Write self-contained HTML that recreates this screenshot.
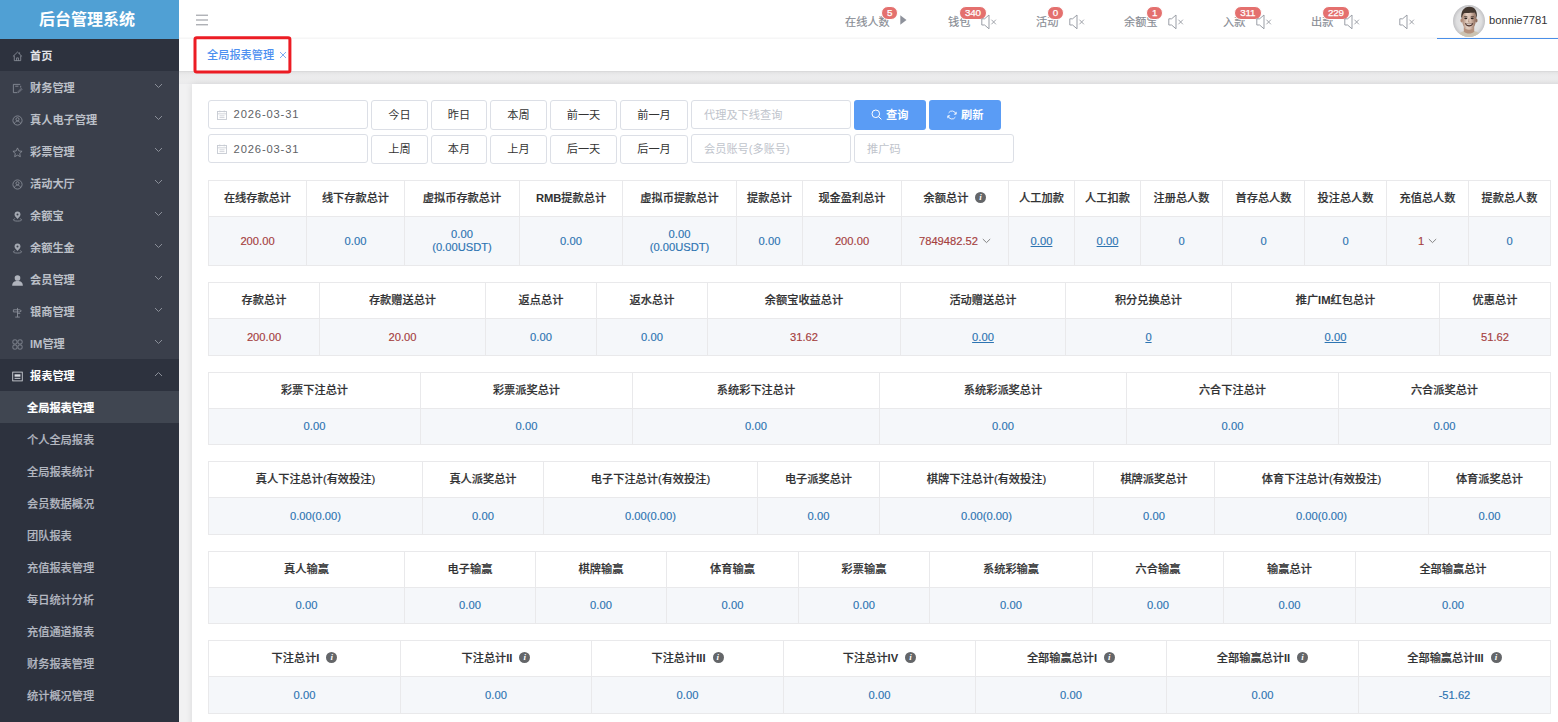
<!DOCTYPE html><html lang="zh-CN"><head><meta charset="utf-8"><title>后台管理系统</title><style>
*{box-sizing:border-box;margin:0;padding:0}
html,body{width:1558px;height:722px;overflow:hidden}
body{position:relative;background:#f1f1f2;font-family:"Liberation Sans","Noto Sans CJK SC",sans-serif;font-size:11.2px;color:#333;-webkit-font-smoothing:antialiased}
.abs{position:absolute}
#side{position:absolute;left:0;top:0;width:179px;height:722px;background:#3a3f4b;overflow:hidden}
#logo{position:absolute;left:0;top:0;width:179px;height:39px;background:#50a0d4;color:#fff;font-weight:700;font-size:16px;line-height:39px;text-align:center;padding-right:5px}
.mi{position:absolute;left:0;width:179px;height:32px;line-height:35px;color:#bcc0c8;font-weight:700;font-size:11.2px;padding-left:30px;white-space:nowrap}
.mi svg.ic{position:absolute;left:11.5px;top:11.5px;width:11px;height:11px}
.mi svg.ch{position:absolute;left:154px;top:11.5px;width:9px;height:6px}
.sub{font-weight:500;-webkit-text-stroke:0.2px currentColor;color:#b4b8c1;padding-left:27px;background:#2d323e}
.dark{background:#2d323e}
#top{position:absolute;left:179px;top:0;width:1379px;height:39px;background:#fff}
#topline{position:absolute;left:179px;top:37px;width:1379px;height:2px;background:linear-gradient(#fcfcfc,#f4f4f5)}
#tabs{position:absolute;left:179px;top:39px;width:1379px;height:32px;background:#fff}
#shadow{position:absolute;left:179px;top:71px;width:1379px;height:13px;background:linear-gradient(#d4d4d5 0,#e3e3e4 1.2px,#ebebec 4px,#ededee 8px,#ebebec 12px,#e9e9ec 13px)}
#card{position:absolute;left:192px;top:84px;width:1380px;height:660px;background:#fff;box-shadow:0 0 7px rgba(0,0,0,.10)}
.nav{position:absolute;top:0;height:39px;line-height:44.5px;font-size:11.2px;color:#888c94;white-space:nowrap;font-weight:400;-webkit-text-stroke:0.15px #888c94}
.bdg{position:absolute;top:5.5px;height:14.6px;line-height:12.6px;border-radius:8px;background:#e4706e;color:#fff;font-size:9.8px;letter-spacing:-.25px;text-align:center;border:1px solid #fff;font-weight:400;padding:0 4.4px 0 4.7px;-webkit-text-stroke:0.25px #fff}
.spk{position:absolute;top:14px;width:16px;height:16px}
.inp{position:absolute;height:29px;border:1px solid #dcdfe6;border-radius:3px;background:#fff;line-height:28.5px;font-size:11.2px;color:#606266;white-space:nowrap}
.ph{color:#c0c4cc;padding-left:12px;font-weight:400}
.btn{position:absolute;height:29px;border:1px solid #dcdfe6;border-radius:3px;background:#fff;line-height:28px;font-size:11.2px;color:#333;text-align:center;white-space:nowrap}
.pbtn{position:absolute;height:30px;border-radius:3px;background:#5a9cf5;color:#fff;font-weight:700;line-height:30px;font-size:11.2px;white-space:nowrap}
.tb{position:absolute;left:208px;width:1343px;border-top:1px solid #e9e9eb;border-left:1px solid #e9e9eb}
.c{position:absolute;border-right:1px solid #e9e9eb;border-bottom:1px solid #e9e9eb;text-align:center;white-space:nowrap;display:flex;align-items:center;justify-content:center}
.h{background:#fff;color:#303133;font-weight:500;-webkit-text-stroke:0.2px #333;font-size:11.2px;padding-bottom:4px}
.h b{font-weight:700;-webkit-text-stroke:0;position:relative;top:1px}
.b{background:#f5f7fa;font-size:11.2px;-webkit-text-stroke:0.15px currentColor}
.b2{padding-bottom:2px}
.r{color:#a5403e}.u{color:#2d74b2}
.lk{color:#2d74b2;text-decoration:underline}
.info{display:inline-block;width:11px;height:11px;border-radius:50%;background:#646669;color:#fff;font-size:9px;line-height:11px;font-style:italic;font-weight:700;font-family:"Liberation Serif",serif;margin-left:7px;text-align:center;vertical-align:-2px;position:relative;top:1px;-webkit-text-stroke:0;text-indent:-0.5px}
</style></head><body>
<div id="side"><div id="logo">后台管理系统</div>
<div class="mi dark" style="top:39px;color:#e1e3e8;"><svg class="ic" viewBox="0 0 12 12"><path d="M1 6 L6 1.2 L11 6 M2.5 5 V10.5 H9.5 V5 M5 10.5 V7.5 H7 V10.5 M8.3 1.5 V3" fill="none" stroke="#8d929c" stroke-width="0.9"/></svg>首页</div>
<div class="mi" style="top:71px;"><svg class="ic" viewBox="0 0 12 12"><path d="M9 1.5 H1.5 V10.5 H6 M3.5 3.5 H7 M9.5 3 V5" fill="none" stroke="#8d929c" stroke-width="0.9"/><path d="M6.5 9.5 L10 6 L10.8 7 L7.5 10.3 Z" fill="none" stroke="#8d929c" stroke-width="0.8"/></svg>财务管理<svg class="ch" viewBox="0 0 9 6"><path d="M1 1 L4.5 4.5 L8 1" fill="none" stroke="#8a8f99" stroke-width="1"/></svg></div>
<div class="mi" style="top:103px;"><svg class="ic" viewBox="0 0 12 12"><circle cx="6" cy="6" r="5" fill="none" stroke="#8d929c" stroke-width="0.9"/><circle cx="6" cy="4.6" r="1.7" fill="none" stroke="#8d929c" stroke-width="0.9"/><path d="M2.6 9.6 C3.5 7 5 6.6 6 6.6 C7 6.6 8.5 7 9.4 9.6" fill="none" stroke="#8d929c" stroke-width="0.9"/></svg>真人电子管理<svg class="ch" viewBox="0 0 9 6"><path d="M1 1 L4.5 4.5 L8 1" fill="none" stroke="#8a8f99" stroke-width="1"/></svg></div>
<div class="mi" style="top:135px;"><svg class="ic" viewBox="0 0 12 12"><path d="M6 1 L7.5 4.3 L11 4.7 L8.4 7.1 L9.1 10.6 L6 8.9 L2.9 10.6 L3.6 7.1 L1 4.7 L4.5 4.3 Z" fill="none" stroke="#8d929c" stroke-width="0.9" stroke-linejoin="round"/></svg>彩票管理<svg class="ch" viewBox="0 0 9 6"><path d="M1 1 L4.5 4.5 L8 1" fill="none" stroke="#8a8f99" stroke-width="1"/></svg></div>
<div class="mi" style="top:167px;"><svg class="ic" viewBox="0 0 12 12"><circle cx="6" cy="6" r="5" fill="none" stroke="#8d929c" stroke-width="0.9"/><circle cx="6" cy="4.6" r="1.7" fill="none" stroke="#8d929c" stroke-width="0.9"/><path d="M2.6 9.6 C3.5 7 5 6.6 6 6.6 C7 6.6 8.5 7 9.4 9.6" fill="none" stroke="#8d929c" stroke-width="0.9"/></svg>活动大厅<svg class="ch" viewBox="0 0 9 6"><path d="M1 1 L4.5 4.5 L8 1" fill="none" stroke="#8a8f99" stroke-width="1"/></svg></div>
<div class="mi" style="top:199px;"><svg class="ic" viewBox="0 0 12 12"><path d="M6 8.8 C3.8 6.2 2.8 5 2.8 3.7 A3.2 3.2 0 0 1 9.2 3.7 C9.2 5 8.2 6.2 6 8.8 Z" fill="#a4a9b2"/><circle cx="6" cy="3.7" r="1.1" fill="#3a3f4b"/><path d="M3.4 8.4 C0.6 9 0.6 11 6 11 C11.4 11 11.4 9 8.6 8.4" fill="none" stroke="#8d929c" stroke-width="0.9"/></svg>余额宝<svg class="ch" viewBox="0 0 9 6"><path d="M1 1 L4.5 4.5 L8 1" fill="none" stroke="#8a8f99" stroke-width="1"/></svg></div>
<div class="mi" style="top:231px;"><svg class="ic" viewBox="0 0 12 12"><path d="M6 8.8 C3.8 6.2 2.8 5 2.8 3.7 A3.2 3.2 0 0 1 9.2 3.7 C9.2 5 8.2 6.2 6 8.8 Z" fill="#a4a9b2"/><circle cx="6" cy="3.7" r="1.1" fill="#3a3f4b"/><path d="M3.4 8.4 C0.6 9 0.6 11 6 11 C11.4 11 11.4 9 8.6 8.4" fill="none" stroke="#8d929c" stroke-width="0.9"/></svg>余额生金<svg class="ch" viewBox="0 0 9 6"><path d="M1 1 L4.5 4.5 L8 1" fill="none" stroke="#8a8f99" stroke-width="1"/></svg></div>
<div class="mi" style="top:263px;"><svg class="ic" viewBox="0 0 12 12"><circle cx="6" cy="3.3" r="3.1" fill="#b0b4bd"/><path d="M0.2 11.8 C0.2 7.8 2.6 6.6 6 6.6 C9.4 6.6 11.8 7.8 11.8 11.8 Z" fill="#b0b4bd"/></svg>会员管理<svg class="ch" viewBox="0 0 9 6"><path d="M1 1 L4.5 4.5 L8 1" fill="none" stroke="#8a8f99" stroke-width="1"/></svg></div>
<div class="mi" style="top:295px;"><svg class="ic" viewBox="0 0 12 12"><path d="M6 1 V11 M3.5 11 H8.5 M1.5 3 H8.5 L10.2 4.2 L8.5 5.4 H1.5 Z M6 7 H9" fill="none" stroke="#8d929c" stroke-width="0.9"/></svg>银商管理<svg class="ch" viewBox="0 0 9 6"><path d="M1 1 L4.5 4.5 L8 1" fill="none" stroke="#8a8f99" stroke-width="1"/></svg></div>
<div class="mi" style="top:327px;"><svg class="ic" viewBox="0 0 12 12"><rect x="1" y="1" width="4.4" height="4.4" rx="1.2" fill="none" stroke="#8d929c" stroke-width="0.9"/><rect x="6.6" y="1" width="4.4" height="4.4" rx="1.2" fill="none" stroke="#8d929c" stroke-width="0.9"/><rect x="1" y="6.6" width="4.4" height="4.4" rx="1.2" fill="none" stroke="#8d929c" stroke-width="0.9"/><rect x="6.6" y="6.6" width="4.4" height="4.4" rx="1.2" fill="none" stroke="#8d929c" stroke-width="0.9"/></svg>IM管理<svg class="ch" viewBox="0 0 9 6"><path d="M1 1 L4.5 4.5 L8 1" fill="none" stroke="#8a8f99" stroke-width="1"/></svg></div>
<div class="mi dark" style="top:359px;color:#fff"><svg class="ic" viewBox="0 0 12 12"><rect x="0.8" y="1.2" width="10.4" height="9.6" fill="none" stroke="#d8dbe0" stroke-width="0.9"/><rect x="2.8" y="3.6" width="6.4" height="2.6" fill="#d8dbe0"/><path d="M2.8 8 H9.2" stroke="#d8dbe0" stroke-width="1"/></svg>报表管理<svg class="ch" viewBox="0 0 9 6"><path d="M1 5 L4.5 1.5 L8 5" fill="none" stroke="#8a8f99" stroke-width="1"/></svg></div>
<div class="mi sub" style="top:391px;background:#404651;color:#fff;font-weight:700">全局报表管理</div>
<div class="mi sub" style="top:423px">个人全局报表</div>
<div class="mi sub" style="top:455px">全局报表统计</div>
<div class="mi sub" style="top:487px">会员数据概况</div>
<div class="mi sub" style="top:519px">团队报表</div>
<div class="mi sub" style="top:551px">充值报表管理</div>
<div class="mi sub" style="top:583px">每日统计分析</div>
<div class="mi sub" style="top:615px">充值通道报表</div>
<div class="mi sub" style="top:647px">财务报表管理</div>
<div class="mi sub" style="top:679px">统计概况管理</div>
<div class="dark abs" style="left:0;top:711px;width:179px;height:40px"></div>
</div>
<div id="top"></div><div id="topline"></div>
<svg class="abs" style="left:196px;top:14px;width:13px;height:12px" viewBox="0 0 13 12"><path d="M0 1.2 H12 M0 6 H12 M0 10.8 H12" stroke="#8e9198" stroke-width="1"/></svg>
<div class="nav" style="left:845px">在线人数</div>
<div class="bdg" style="left:881px;min-width:17px">5</div>
<div class="nav" style="left:948px">钱包</div>
<div class="bdg" style="left:958.7px;min-width:28px">340</div>
<svg class="spk" style="left:981px" viewBox="0 0 16 16"><path d="M0.8 4.8 H3.6 L8 1 V14.8 L3.6 11 H0.8 Z" fill="none" stroke="#969aa2" stroke-width="0.95" stroke-linejoin="round"/><path d="M10.4 5.7 L14.9 10.3 M14.9 5.7 L10.4 10.3" stroke="#969aa2" stroke-width="0.9"/></svg>
<div class="nav" style="left:1036px">活动</div>
<div class="bdg" style="left:1046.6px;min-width:17px">0</div>
<svg class="spk" style="left:1069px" viewBox="0 0 16 16"><path d="M0.8 4.8 H3.6 L8 1 V14.8 L3.6 11 H0.8 Z" fill="none" stroke="#969aa2" stroke-width="0.95" stroke-linejoin="round"/><path d="M10.4 5.7 L14.9 10.3 M14.9 5.7 L10.4 10.3" stroke="#969aa2" stroke-width="0.9"/></svg>
<div class="nav" style="left:1124px">余额宝</div>
<div class="bdg" style="left:1146px;min-width:17px">1</div>
<svg class="spk" style="left:1168px" viewBox="0 0 16 16"><path d="M0.8 4.8 H3.6 L8 1 V14.8 L3.6 11 H0.8 Z" fill="none" stroke="#969aa2" stroke-width="0.95" stroke-linejoin="round"/><path d="M10.4 5.7 L14.9 10.3 M14.9 5.7 L10.4 10.3" stroke="#969aa2" stroke-width="0.9"/></svg>
<div class="nav" style="left:1223px">入款</div>
<div class="bdg" style="left:1233.6px;min-width:28px">311</div>
<svg class="spk" style="left:1256px" viewBox="0 0 16 16"><path d="M0.8 4.8 H3.6 L8 1 V14.8 L3.6 11 H0.8 Z" fill="none" stroke="#969aa2" stroke-width="0.95" stroke-linejoin="round"/><path d="M10.4 5.7 L14.9 10.3 M14.9 5.7 L10.4 10.3" stroke="#969aa2" stroke-width="0.9"/></svg>
<div class="nav" style="left:1311px">出款</div>
<div class="bdg" style="left:1321.7px;min-width:28px">229</div>
<svg class="spk" style="left:1344px" viewBox="0 0 16 16"><path d="M0.8 4.8 H3.6 L8 1 V14.8 L3.6 11 H0.8 Z" fill="none" stroke="#969aa2" stroke-width="0.95" stroke-linejoin="round"/><path d="M10.4 5.7 L14.9 10.3 M14.9 5.7 L10.4 10.3" stroke="#969aa2" stroke-width="0.9"/></svg>
<svg class="abs" style="left:900px;top:15px;width:7px;height:10px" viewBox="0 0 7 10"><path d="M0.3 0.3 L6.5 5 L0.3 9.7 Z" fill="#8e929b"/></svg>
<svg class="spk" style="left:1399px" viewBox="0 0 16 16"><path d="M0.8 4.8 H3.6 L8 1 V14.8 L3.6 11 H0.8 Z" fill="none" stroke="#969aa2" stroke-width="0.95" stroke-linejoin="round"/><path d="M10.4 5.7 L14.9 10.3 M14.9 5.7 L10.4 10.3" stroke="#969aa2" stroke-width="0.9"/></svg>
<svg class="abs" style="left:1453px;top:5px;width:32px;height:32px" viewBox="0 0 32 32"><defs><clipPath id="av"><circle cx="16" cy="16" r="16"/></clipPath><radialGradient id="avg" cx="50%" cy="50%" r="52%"><stop offset="0" stop-color="#f0f0f1"/><stop offset="0.75" stop-color="#dededf"/><stop offset="1" stop-color="#bdbdc0"/></radialGradient><linearGradient id="fc" x1="0" x2="1" y1="0" y2="0"><stop offset="0" stop-color="#a98673"/><stop offset="0.35" stop-color="#e3cfc2"/><stop offset="0.6" stop-color="#d9bfb0"/><stop offset="1" stop-color="#8f6d5c"/></linearGradient></defs><g clip-path="url(#av)"><rect width="32" height="32" fill="url(#avg)"/><path d="M4.5 33 C5.5 27.6 9 26.6 12 25.8 L20.5 25.8 C23.5 26.6 27 27.6 28 33 Z" fill="#cbc3b2"/><path d="M10.8 22 H21.2 V26.4 C19 29.2 13.4 29.2 10.8 26.4 Z" fill="#b4917e"/><ellipse cx="8.6" cy="15.6" rx="1.1" ry="2" fill="#b08b78"/><ellipse cx="23.4" cy="15.6" rx="1.1" ry="2" fill="#8e6c5b"/><path d="M9 12 C9 6.5 12 5.6 16 5.6 C20 5.6 23 6.5 23 12 C23 17 22.4 20.6 20.4 23 C18.6 25.2 13.6 25.2 11.6 23 C9.6 20.6 9 17 9 12 Z" fill="url(#fc)"/><path d="M11.3 20.5 C12.5 24.6 19.5 24.6 20.7 20.5 C20.2 22.6 18.6 23.6 16 23.6 C13.4 23.6 11.8 22.6 11.3 20.5 Z" fill="#6e5345" opacity=".55"/><path d="M8.4 14 C7.4 6.4 10.8 1.7 16.4 1.7 C22 1.7 25 6 23.6 14 C23.2 11 22.8 9 21.6 7.6 C18.6 8.2 13 7.8 10.6 8.4 C9.4 10 8.8 12 8.4 14 Z" fill="#43372f"/><path d="M10.9 12 C11.8 11.3 13.6 11.3 14.5 12 M17.6 12 C18.5 11.3 20.3 11.3 21.2 12" stroke="#3d2f28" stroke-width="0.8" fill="none"/><ellipse cx="12.8" cy="13.4" rx="1.5" ry="0.8" fill="#2e2420"/><ellipse cx="19.2" cy="13.4" rx="1.5" ry="0.8" fill="#2e2420"/><path d="M16 13.6 L15.4 17 H17.2" stroke="#8c6a58" stroke-width="0.6" fill="none" opacity=".7"/><path d="M11.9 18 C13.6 19.1 18.6 19.1 20.3 18 C19.6 20.7 17.8 21.4 16.1 21.4 C14.4 21.4 12.6 20.7 11.9 18 Z" fill="#4a302a"/><path d="M12.9 18.6 C14.6 19.4 17.6 19.4 19.3 18.6 C18.6 19.9 17.4 20.2 16.1 20.2 C14.8 20.2 13.6 19.9 12.9 18.6 Z" fill="#efe9e4"/></g></svg>
<div class="abs" style="left:1489px;top:0;height:39px;line-height:41px;font-size:11.2px;color:#333">bonnie7781</div>
<div class="abs" style="left:1437px;top:37.5px;width:121px;height:1.5px;background:#4a8fe8"></div>
<div id="tabs"></div><div id="shadow"></div>
<div class="abs" style="left:207px;top:39px;height:32px;line-height:32px;color:#4c8ff0;font-size:11.2px;font-weight:500;line-height:33px">全局报表管理</div>
<svg class="abs" style="left:279px;top:51px;width:8px;height:8px" viewBox="0 0 8 8"><path d="M1 1 L7 7 M7 1 L1 7" stroke="#6fa4f2" stroke-width="0.9"/></svg>
<svg class="abs" style="left:190px;top:33px;width:106px;height:44px" viewBox="0 0 106 44"><rect x="5" y="4.8" width="94.9" height="34.2" rx="1.8" fill="none" stroke="#ec1c24" stroke-width="3"/></svg>
<div id="card"></div>
<div class="inp" style="left:208px;top:100px;width:160px;line-height:27.5px"><svg class="abs" style="left:8px;top:9px;width:10px;height:10px" viewBox="0 0 10 10"><rect x="0.5" y="1.5" width="9" height="8" fill="none" stroke="#c6cad2" stroke-width="0.9"/><path d="M0.5 3.8 H9.5 M2.8 0.5 V2.3 M7.2 0.5 V2.3 M2.5 5.8 H7.5 M2.5 7.6 H7.5" stroke="#c6cad2" stroke-width="0.8"/></svg><span style="position:absolute;left:24.6px;letter-spacing:.85px">2026-03-31</span></div>
<div class="inp" style="left:208px;top:134px;width:160px;line-height:28.5px"><svg class="abs" style="left:8px;top:9px;width:10px;height:10px" viewBox="0 0 10 10"><rect x="0.5" y="1.5" width="9" height="8" fill="none" stroke="#c6cad2" stroke-width="0.9"/><path d="M0.5 3.8 H9.5 M2.8 0.5 V2.3 M7.2 0.5 V2.3 M2.5 5.8 H7.5 M2.5 7.6 H7.5" stroke="#c6cad2" stroke-width="0.8"/></svg><span style="position:absolute;left:24.6px;letter-spacing:.85px">2026-03-31</span></div>
<div class="btn" style="left:371px;top:100px;width:57px;height:30px;line-height:28px">今日</div>
<div class="btn" style="left:371px;top:135px;width:57px;line-height:27px">上周</div>
<div class="btn" style="left:431px;top:100px;width:56px;height:30px;line-height:28px">昨日</div>
<div class="btn" style="left:431px;top:135px;width:56px;line-height:27px">本月</div>
<div class="btn" style="left:490px;top:100px;width:57px;height:30px;line-height:28px">本周</div>
<div class="btn" style="left:490px;top:135px;width:57px;line-height:27px">上月</div>
<div class="btn" style="left:550px;top:100px;width:67px;height:30px;line-height:28px">前一天</div>
<div class="btn" style="left:550px;top:135px;width:67px;line-height:27px">后一天</div>
<div class="btn" style="left:620px;top:100px;width:68px;height:30px;line-height:28px">前一月</div>
<div class="btn" style="left:620px;top:135px;width:68px;line-height:27px">后一月</div>
<div class="inp ph" style="left:691px;top:100px;width:160px">代理及下线查询</div>
<div class="inp ph" style="left:691px;top:134px;width:160px">会员账号(多账号)</div>
<div class="inp ph" style="left:854px;top:134px;width:160px">推广码</div>
<div class="pbtn" style="left:854px;top:100px;width:72px"><svg class="abs" style="left:17px;top:9px;width:11px;height:11px" viewBox="0 0 11 11"><circle cx="4.8" cy="4.8" r="3.8" fill="none" stroke="#fff" stroke-width="1"/><path d="M7.6 7.6 L10.4 10.4" stroke="#fff" stroke-width="1"/></svg><span class="abs" style="left:32px">查询</span></div>
<div class="pbtn" style="left:929px;top:100px;width:72px"><svg class="abs" style="left:18px;top:10px;width:10px;height:10px" viewBox="0 0 10 10"><path d="M8.9 4 A4 4 0 0 0 1.6 2.9 M1.1 6 A4 4 0 0 0 8.4 7.1" fill="none" stroke="#fff" stroke-width="0.85"/><path d="M9.2 1.8 V4.2 H6.9 M0.8 8.2 V5.8 H3.1" fill="none" stroke="#fff" stroke-width="0.85"/></svg><span class="abs" style="left:32px">刷新</span></div>
<div class="tb" style="top:180px;height:86px"><div class="c h" style="left:0px;top:0;width:98px;height:36px">在线存款总计</div><div class="c b " style="left:0px;top:36px;width:98px;height:49px"><span class="r">200.00</span></div><div class="c h" style="left:98px;top:0;width:98px;height:36px">线下存款总计</div><div class="c b " style="left:98px;top:36px;width:98px;height:49px"><span class="u">0.00</span></div><div class="c h" style="left:196px;top:0;width:115px;height:36px">虚拟币存款总计</div><div class="c b " style="left:196px;top:36px;width:115px;height:49px"><span class="u" style="line-height:13px;position:relative;top:-0.5px">0.00<br>(0.00USDT)</span></div><div class="c h" style="left:311px;top:0;width:103px;height:36px"><b>RMB</b>提款总计</div><div class="c b " style="left:311px;top:36px;width:103px;height:49px"><span class="u">0.00</span></div><div class="c h" style="left:414px;top:0;width:114px;height:36px">虚拟币提款总计</div><div class="c b " style="left:414px;top:36px;width:114px;height:49px"><span class="u" style="line-height:13px;position:relative;top:-0.5px">0.00<br>(0.00USDT)</span></div><div class="c h" style="left:528px;top:0;width:66px;height:36px">提款总计</div><div class="c b " style="left:528px;top:36px;width:66px;height:49px"><span class="u">0.00</span></div><div class="c h" style="left:594px;top:0;width:99px;height:36px">现金盈利总计</div><div class="c b " style="left:594px;top:36px;width:99px;height:49px"><span class="r">200.00</span></div><div class="c h" style="left:693px;top:0;width:107px;height:36px">余额总计 <span class="info">i</span></div><div class="c b " style="left:693px;top:36px;width:107px;height:49px"><span class="r">7849482.52</span><svg style="width:9px;height:6px;margin-left:4px" viewBox="0 0 9 6"><path d="M0.8 1 L4.5 4.6 L8.2 1" fill="none" stroke="#777" stroke-width="0.9"/></svg></div><div class="c h" style="left:800px;top:0;width:66px;height:36px">人工加款</div><div class="c b " style="left:800px;top:36px;width:66px;height:49px"><span class="lk">0.00</span></div><div class="c h" style="left:866px;top:0;width:66px;height:36px">人工扣款</div><div class="c b " style="left:866px;top:36px;width:66px;height:49px"><span class="lk">0.00</span></div><div class="c h" style="left:932px;top:0;width:82px;height:36px">注册总人数</div><div class="c b " style="left:932px;top:36px;width:82px;height:49px"><span class="u">0</span></div><div class="c h" style="left:1014px;top:0;width:82px;height:36px">首存总人数</div><div class="c b " style="left:1014px;top:36px;width:82px;height:49px"><span class="u">0</span></div><div class="c h" style="left:1096px;top:0;width:82px;height:36px">投注总人数</div><div class="c b " style="left:1096px;top:36px;width:82px;height:49px"><span class="u">0</span></div><div class="c h" style="left:1178px;top:0;width:82px;height:36px">充值总人数</div><div class="c b " style="left:1178px;top:36px;width:82px;height:49px"><span class="r">1</span><svg style="width:9px;height:6px;margin-left:4px" viewBox="0 0 9 6"><path d="M0.8 1 L4.5 4.6 L8.2 1" fill="none" stroke="#777" stroke-width="0.9"/></svg></div><div class="c h" style="left:1260px;top:0;width:82px;height:36px">提款总人数</div><div class="c b " style="left:1260px;top:36px;width:82px;height:49px"><span class="u">0</span></div></div>
<div class="tb" style="top:282px;height:74px"><div class="c h" style="left:0px;top:0;width:111px;height:36px">存款总计</div><div class="c b " style="left:0px;top:36px;width:111px;height:37px"><span class="r">200.00</span></div><div class="c h" style="left:111px;top:0;width:166px;height:36px">存款赠送总计</div><div class="c b " style="left:111px;top:36px;width:166px;height:37px"><span class="r">20.00</span></div><div class="c h" style="left:277px;top:0;width:111px;height:36px">返点总计</div><div class="c b " style="left:277px;top:36px;width:111px;height:37px"><span class="u">0.00</span></div><div class="c h" style="left:388px;top:0;width:111px;height:36px">返水总计</div><div class="c b " style="left:388px;top:36px;width:111px;height:37px"><span class="u">0.00</span></div><div class="c h" style="left:499px;top:0;width:193px;height:36px">余额宝收益总计</div><div class="c b " style="left:499px;top:36px;width:193px;height:37px"><span class="r">31.62</span></div><div class="c h" style="left:692px;top:0;width:165px;height:36px">活动赠送总计</div><div class="c b " style="left:692px;top:36px;width:165px;height:37px"><span class="lk">0.00</span></div><div class="c h" style="left:857px;top:0;width:166px;height:36px">积分兑换总计</div><div class="c b " style="left:857px;top:36px;width:166px;height:37px"><span class="lk">0</span></div><div class="c h" style="left:1023px;top:0;width:208px;height:36px">推广<b>IM</b>红包总计</div><div class="c b " style="left:1023px;top:36px;width:208px;height:37px"><span class="lk">0.00</span></div><div class="c h" style="left:1231px;top:0;width:111px;height:36px">优惠总计</div><div class="c b " style="left:1231px;top:36px;width:111px;height:37px"><span class="r">51.62</span></div></div>
<div class="tb" style="top:372px;height:73px"><div class="c h" style="left:0px;top:0;width:212px;height:36px">彩票下注总计</div><div class="c b b2" style="left:0px;top:36px;width:212px;height:36px"><span class="u">0.00</span></div><div class="c h" style="left:212px;top:0;width:212px;height:36px">彩票派奖总计</div><div class="c b b2" style="left:212px;top:36px;width:212px;height:36px"><span class="u">0.00</span></div><div class="c h" style="left:424px;top:0;width:247px;height:36px">系统彩下注总计</div><div class="c b b2" style="left:424px;top:36px;width:247px;height:36px"><span class="u">0.00</span></div><div class="c h" style="left:671px;top:0;width:247px;height:36px">系统彩派奖总计</div><div class="c b b2" style="left:671px;top:36px;width:247px;height:36px"><span class="u">0.00</span></div><div class="c h" style="left:918px;top:0;width:212px;height:36px">六合下注总计</div><div class="c b b2" style="left:918px;top:36px;width:212px;height:36px"><span class="u">0.00</span></div><div class="c h" style="left:1130px;top:0;width:212px;height:36px">六合派奖总计</div><div class="c b b2" style="left:1130px;top:36px;width:212px;height:36px"><span class="u">0.00</span></div></div>
<div class="tb" style="top:461px;height:74px"><div class="c h" style="left:0px;top:0;width:214px;height:36px">真人下注总计(有效投注)</div><div class="c b " style="left:0px;top:36px;width:214px;height:37px"><span class="u">0.00(0.00)</span></div><div class="c h" style="left:214px;top:0;width:121px;height:36px">真人派奖总计</div><div class="c b " style="left:214px;top:36px;width:121px;height:37px"><span class="u">0.00</span></div><div class="c h" style="left:335px;top:0;width:214px;height:36px">电子下注总计(有效投注)</div><div class="c b " style="left:335px;top:36px;width:214px;height:37px"><span class="u">0.00(0.00)</span></div><div class="c h" style="left:549px;top:0;width:122px;height:36px">电子派奖总计</div><div class="c b " style="left:549px;top:36px;width:122px;height:37px"><span class="u">0.00</span></div><div class="c h" style="left:671px;top:0;width:214px;height:36px">棋牌下注总计(有效投注)</div><div class="c b " style="left:671px;top:36px;width:214px;height:37px"><span class="u">0.00(0.00)</span></div><div class="c h" style="left:885px;top:0;width:121px;height:36px">棋牌派奖总计</div><div class="c b " style="left:885px;top:36px;width:121px;height:37px"><span class="u">0.00</span></div><div class="c h" style="left:1006px;top:0;width:214px;height:36px">体育下注总计(有效投注)</div><div class="c b " style="left:1006px;top:36px;width:214px;height:37px"><span class="u">0.00(0.00)</span></div><div class="c h" style="left:1220px;top:0;width:122px;height:36px">体育派奖总计</div><div class="c b " style="left:1220px;top:36px;width:122px;height:37px"><span class="u">0.00</span></div></div>
<div class="tb" style="top:551px;height:73px"><div class="c h" style="left:0px;top:0;width:196px;height:36px">真人输赢</div><div class="c b b2" style="left:0px;top:36px;width:196px;height:36px"><span class="u">0.00</span></div><div class="c h" style="left:196px;top:0;width:131px;height:36px">电子输赢</div><div class="c b b2" style="left:196px;top:36px;width:131px;height:36px"><span class="u">0.00</span></div><div class="c h" style="left:327px;top:0;width:131px;height:36px">棋牌输赢</div><div class="c b b2" style="left:327px;top:36px;width:131px;height:36px"><span class="u">0.00</span></div><div class="c h" style="left:458px;top:0;width:132px;height:36px">体育输赢</div><div class="c b b2" style="left:458px;top:36px;width:132px;height:36px"><span class="u">0.00</span></div><div class="c h" style="left:590px;top:0;width:131px;height:36px">彩票输赢</div><div class="c b b2" style="left:590px;top:36px;width:131px;height:36px"><span class="u">0.00</span></div><div class="c h" style="left:721px;top:0;width:163px;height:36px">系统彩输赢</div><div class="c b b2" style="left:721px;top:36px;width:163px;height:36px"><span class="u">0.00</span></div><div class="c h" style="left:884px;top:0;width:131px;height:36px">六合输赢</div><div class="c b b2" style="left:884px;top:36px;width:131px;height:36px"><span class="u">0.00</span></div><div class="c h" style="left:1015px;top:0;width:132px;height:36px">输赢总计</div><div class="c b b2" style="left:1015px;top:36px;width:132px;height:36px"><span class="u">0.00</span></div><div class="c h" style="left:1147px;top:0;width:195px;height:36px">全部输赢总计</div><div class="c b b2" style="left:1147px;top:36px;width:195px;height:36px"><span class="u">0.00</span></div></div>
<div class="tb" style="top:640px;height:74px"><div class="c h" style="left:0px;top:0;width:192px;height:36px">下注总计<b>I</b> <span class="info">i</span></div><div class="c b " style="left:0px;top:36px;width:192px;height:37px"><span class="u">0.00</span></div><div class="c h" style="left:192px;top:0;width:191px;height:36px">下注总计<b>II</b> <span class="info">i</span></div><div class="c b " style="left:192px;top:36px;width:191px;height:37px"><span class="u">0.00</span></div><div class="c h" style="left:383px;top:0;width:192px;height:36px">下注总计<b>III</b> <span class="info">i</span></div><div class="c b " style="left:383px;top:36px;width:192px;height:37px"><span class="u">0.00</span></div><div class="c h" style="left:575px;top:0;width:192px;height:36px">下注总计<b>IV</b> <span class="info">i</span></div><div class="c b " style="left:575px;top:36px;width:192px;height:37px"><span class="u">0.00</span></div><div class="c h" style="left:767px;top:0;width:191px;height:36px">全部输赢总计<b>I</b> <span class="info">i</span></div><div class="c b " style="left:767px;top:36px;width:191px;height:37px"><span class="u">0.00</span></div><div class="c h" style="left:958px;top:0;width:192px;height:36px">全部输赢总计<b>II</b> <span class="info">i</span></div><div class="c b " style="left:958px;top:36px;width:192px;height:37px"><span class="u">0.00</span></div><div class="c h" style="left:1150px;top:0;width:192px;height:36px">全部输赢总计<b>III</b> <span class="info">i</span></div><div class="c b " style="left:1150px;top:36px;width:192px;height:37px"><span class="u">-51.62</span></div></div>
</body></html>
